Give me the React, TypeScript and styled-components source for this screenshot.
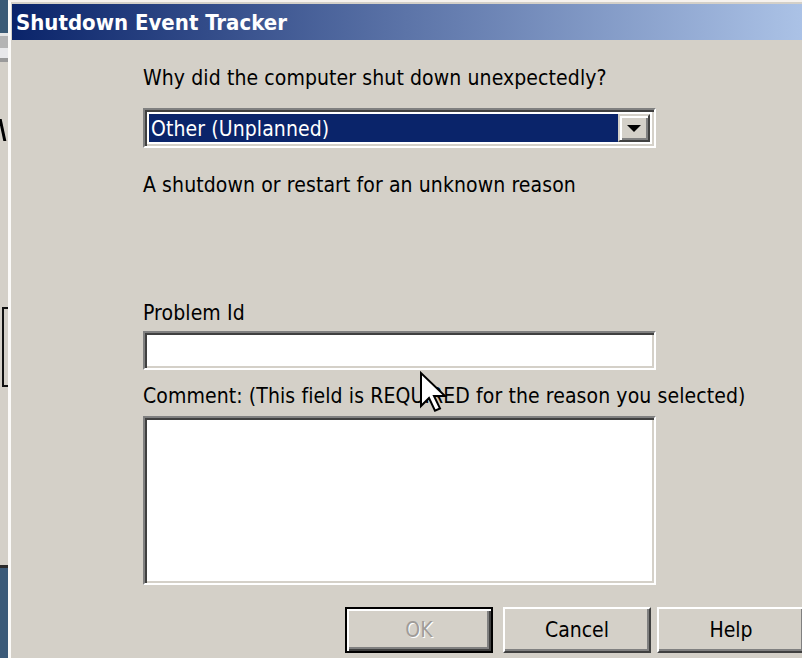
import React from "react";
import styled, { createGlobalStyle } from "styled-components";

const GlobalStyle = createGlobalStyle`
  html, body { margin: 0; padding: 0; background: #d4d0c8; }
  body { width: 802px; height: 658px; overflow: hidden; }
  * { box-sizing: border-box; }
`;

const FONT = `"DejaVu Sans Condensed", "DejaVu Sans", "Liberation Sans", sans-serif`;

const Screen = styled.div`
  display: flex;
  width: 802px;
  height: 658px;
  overflow: hidden;
  background: #d4d0c8;
  font-family: ${FONT};
`;

/* ---------- desktop strip behind the dialog ---------- */
const Desktop = styled.div`
  width: 8px;
  flex: none;
  display: flex;
  flex-direction: column;
  overflow: hidden;
  background: #d4d0c8;
`;

const Patch = styled.div<{ $h: number; $bg: string }>`
  height: ${(p) => p.$h}px;
  flex: none;
  background: ${(p) => p.$bg};
`;

const Stroke = styled.div`
  height: 22px;
  width: 3px;
  flex: none;
  margin-left: 1px;
  background: #000;
  transform: skewX(12deg);
`;

const Bracket = styled.div`
  height: 80px;
  flex: none;
  margin-left: 2px;
  border: 2px solid #111;
  border-right: none;
`;

const Fill = styled.div<{ $bg?: string }>`
  flex: 1;
  background: ${(p) => p.$bg || "#d4d0c8"};
  border-top: 3px solid #2a2a2a;
`;

/* ---------- dialog window ---------- */
const Window = styled.div`
  flex: 1;
  display: flex;
  flex-direction: column;
  border-top: 2px solid #f6f2ee;
  border-left: 3px solid #fbfaf8;
  padding: 2px 0 0 1px;
  background: #d4d0c8;
  min-width: 0;
`;

const TitleBar = styled.div`
  height: 36px;
  flex: none;
  display: flex;
  align-items: center;
  padding-left: 4px;
  background: linear-gradient(to right, #0a246a 0%, #5c74a8 50%, #abc2e6 100%);
`;

const Title = styled.span`
  font-family: ${FONT};
  font-weight: bold;
  font-size: 22px;
  color: #fff;
  white-space: nowrap;
`;

const Body = styled.div`
  flex: 1;
  display: flex;
  flex-direction: column;
  padding-left: 131px;
  width: 644px;
`;

const Label = styled.div<{ $mt: number }>`
  position: relative;
  margin-top: ${(p) => p.$mt}px;
  height: 24px;
  line-height: 24px;
  font-size: 21px;
  letter-spacing: 0.1px;
  color: #000;
  white-space: nowrap;
`;

const sunken = `
  border-style: solid;
  border-width: 2px;
  border-color: #808080 #ffffff #ffffff #808080;
  box-shadow: inset 2px 2px 0 #404040, inset -2px -2px 0 #d4d0c8;
`;

const Combo = styled.div`
  margin-top: 18px;
  width: 513px;
  height: 40px;
  ${sunken}
  background: #fff;
  padding: 4px;
  display: flex;
`;

const Selection = styled.div`
  flex: 1;
  background: #0a246a;
  color: #fff;
  font-size: 21px;
  letter-spacing: 0.1px;
  line-height: 31px;
  padding-left: 2px;
  white-space: nowrap;
`;

const DropButton = styled.div`
  width: 32px;
  flex: none;
  display: flex;
  align-items: center;
  justify-content: center;
  background: #d4d0c8;
  border-style: solid;
  border-width: 2px;
  border-color: #d4d0c8 #404040 #404040 #d4d0c8;
  box-shadow: inset 2px 2px 0 #fff, inset -2px -2px 0 #808080;
`;

const Arrow = styled.div`
  width: 0;
  height: 0;
  border-left: 7px solid transparent;
  border-right: 7px solid transparent;
  border-top: 7px solid #000;
`;

const Field = styled.div<{ $h: number; $mt: number }>`
  margin-top: ${(p) => p.$mt}px;
  width: 513px;
  height: ${(p) => p.$h}px;
  flex: none;
  ${sunken}
  background: #fff;
`;

const ButtonRow = styled.div`
  margin-top: 22px;
  margin-left: 202px;
  display: flex;
  align-items: flex-start;
`;

const Button = styled.div<{ $default?: boolean; $disabled?: boolean; $ml?: number }>`
  width: 148px;
  height: 46px;
  flex: none;
  margin-left: ${(p) => p.$ml || 0}px;
  display: flex;
  align-items: center;
  justify-content: center;
  font-size: 21px;
  background: #d4d0c8;
  color: ${(p) => (p.$disabled ? "#a09c98" : "#000")};
  text-shadow: ${(p) => (p.$disabled ? "1px 1px 0 #fff" : "none")};
  border-style: solid;
  border-width: 2px;
  border-color: ${(p) => (p.$default ? "#000" : "#fff #404040 #404040 #fff")};
  box-shadow: ${(p) =>
    p.$default
      ? "inset 2px 2px 0 #fff, inset -2px -2px 0 #404040, inset -4px -4px 0 #808080"
      : "inset -2px -2px 0 #808080, inset 2px 2px 0 #d4d0c8"};
`;

const Cursor = styled.svg`
  position: absolute;
  left: 277px;
  top: -12px;
  width: 26px;
  height: 40px;
  overflow: visible;
`;

export default function App() {
  return (
    <>
      <GlobalStyle />
      <Screen>
        <Desktop>
          <Patch $h={33} $bg="#3b5b76" />
          <Patch $h={3} $bg="#e6e6e6" />
          <Patch $h={12} $bg="#b4b4b4" />
          <Patch $h={10} $bg="#e8e8ea" />
          <Patch $h={4} $bg="#9a9a9a" />
          <Patch $h={57} $bg="#d4d0c8" />
          <Stroke />
          <Patch $h={166} $bg="#d4d0c8" />
          <Bracket />
          <Patch $h={178} $bg="#d4d0c8" />
          <Fill $bg="#3b5a78" />
        </Desktop>
        <Window>
          <TitleBar>
            <Title>Shutdown Event Tracker</Title>
          </TitleBar>
          <Body>
            <Label $mt={26}>Why did the computer shut down unexpectedly?</Label>
            <Combo>
              <Selection>Other (Unplanned)</Selection>
              <DropButton>
                <Arrow />
              </DropButton>
            </Combo>
            <Label $mt={25}>A shutdown or restart for an unknown reason</Label>
            <Label $mt={104}>Problem Id</Label>
            <Field $mt={6} $h={39} />
            <Label $mt={14}>
              Comment: (This field is REQUIRED for the reason you selected)
              <Cursor viewBox="0 0 13 20">
                <path
                  d="M0.5,0.5 L0.5,17 L4.5,13 L7.5,19.3 L10,18.2 L7,12 L12.5,12 Z"
                  fill="#fff"
                  stroke="#000"
                  strokeWidth="1"
                  strokeLinejoin="miter"
                />
              </Cursor>
            </Label>
            <Field $mt={8} $h={169} />
            <ButtonRow>
              <Button $default $disabled>OK</Button>
              <Button $ml={10}>Cancel</Button>
              <Button $ml={6}>Help</Button>
            </ButtonRow>
          </Body>
        </Window>
      </Screen>
    </>
  );
}
